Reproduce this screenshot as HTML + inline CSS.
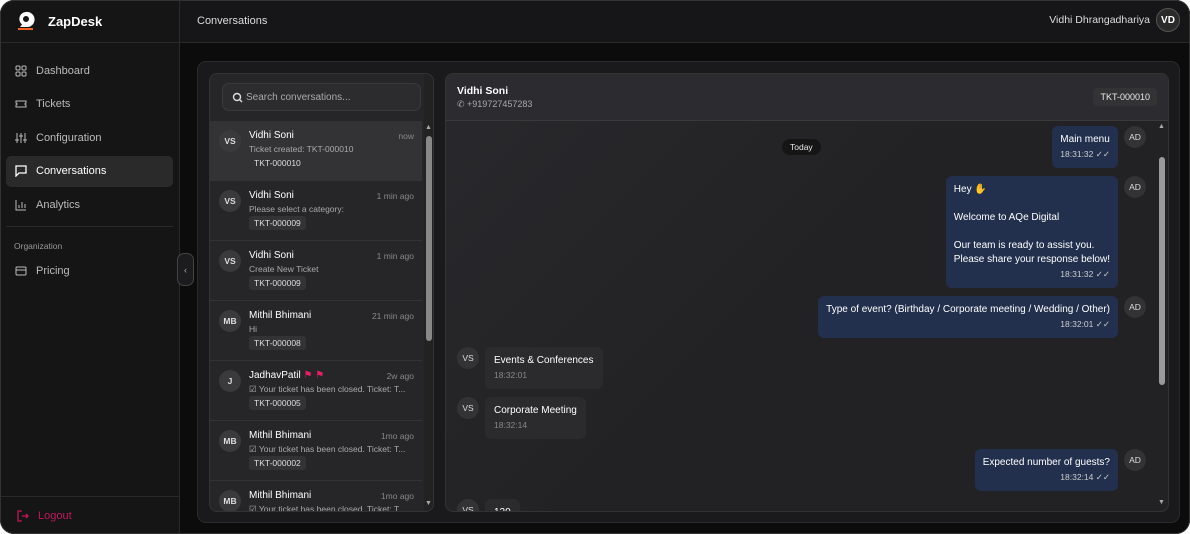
<!DOCTYPE html>
<html><head><meta charset="utf-8"><style>
*{box-sizing:border-box;margin:0;padding:0}
body{width:1190px;height:534px;background:#fff;font-family:"Liberation Sans",sans-serif;color:#e8e8e8;overflow:hidden;position:relative}
.app{position:absolute;left:0;top:0;width:1190px;height:534px;border-radius:14px;overflow:hidden;background:#0c0c0d}
.frame{position:absolute;left:0;top:0;width:1190px;height:534px;border-radius:14px;border:1px solid #333;pointer-events:none}
.side{position:absolute;left:0;top:0;width:180px;height:534px;background:#151515;border-right:1px solid #2a2a2a}
.logo{height:43px;border-bottom:1px solid #2a2a2a;display:flex;align-items:center;padding-left:16px;font-weight:bold;font-size:13px;color:#fff}
.nav{padding:12px 6px}
.it{height:31px;display:flex;align-items:center;padding-left:9px;font-size:11px;color:#bbb;margin-bottom:2.6px;border-radius:5px}
.it svg{margin-right:9px}
.it.act{background:#2a2a2b;color:#fff}
.org{font-size:8.5px;color:#999;padding:14px 8px 4px;border-top:1px solid #2a2a2a;margin-top:6px}
.logout{position:absolute;left:0;bottom:0;width:180px;height:38px;border-top:1px solid #2a2a2a;display:flex;align-items:center;padding-left:17px;color:#c2185b;font-size:11px}
.top{position:absolute;left:180px;top:0;right:0;height:43px;background:#161618;border-bottom:1px solid #2a2a2a;display:flex;align-items:center;padding-left:17px;font-size:11px;color:#ddd}
.user{position:absolute;right:10px;top:8px;display:flex;align-items:center;font-size:10.5px}
.vd{width:24px;height:24px;border-radius:50%;background:#2a2a2a;border:1px solid #555;margin-left:6px;font-weight:bold;font-size:10px;display:flex;align-items:center;justify-content:center;color:#fff}
.card{position:absolute;left:197px;top:61px;width:983px;height:462px;background:#1a1a1c;border:1px solid #2a2a2c;border-radius:9px}
.list{position:absolute;left:209px;top:73px;width:225px;height:439px;background:#262628;border:1px solid #333;border-radius:8px;overflow:hidden}
.search{margin:9px 12px;height:28px;border:1px solid #3a3a3c;border-radius:7px;background:#2c2c2e;display:flex;align-items:center;padding-left:9px;font-size:10px;color:#aaa}
.conv{position:absolute;left:0;width:212px;height:60px;border-bottom:1px solid #333}
.av{position:absolute;left:9px;top:9px;width:22px;height:22px;border-radius:50%;background:#3a3a3c;font-size:8.5px;font-weight:bold;display:flex;align-items:center;justify-content:center;color:#ddd}
.nm{position:absolute;left:39px;top:9px;font-size:10px;color:#fff}
.tm{position:absolute;right:8px;top:10px;font-size:8.5px;color:#888}
.pv{position:absolute;left:39px;top:23px;font-size:8.5px;color:#aaa;white-space:nowrap}
.tag{position:absolute;left:39px;top:35px;background:#333335;font-size:8.5px;color:#ddd;padding:2px 5px;border-radius:3px}
.sb{position:absolute;left:214px;top:0;width:10px;height:439px;background:#222}
.chat{position:absolute;left:445px;top:73px;width:724px;height:439px;background:linear-gradient(135deg,#29292d,#222224 50%);border:1px solid #333;border-radius:8px;overflow:hidden}
.ch{height:47px;background:#2b2b30;border-bottom:1px solid #3a3a3c;padding:11px 11px}
.b{position:absolute;background:#22304e;border-radius:6px;font-size:10px;color:#fff;padding:7px 8px;line-height:14px}
.bi{position:absolute;background:#2b2b2d;border-radius:6px;font-size:10px;color:#fff;padding:7px 9px;line-height:14px}
.ts{font-size:8.5px;color:#ccc;text-align:right}
.bi .ts{color:#888;text-align:left}
.ca{position:absolute;width:22px;height:22px;border-radius:50%;background:#333336;font-size:8.5px;display:flex;align-items:center;justify-content:center;color:#ddd}
</style></head><body><div class="app">
<div class="side">
<div class="logo"><svg width="20" height="22" viewBox="0 0 20 22"><path d="M10 2a7 7 0 0 0-4 12.5L4 17h8a7 7 0 0 0-2-15zm0 4a3 3 0 1 1 0 6 3 3 0 0 1 0-6z" fill="#fff"/><path d="M2 18h15v2H2z" fill="#f26522"/></svg><span style="margin-left:12px">ZapDesk</span></div>
<div class="nav">
<div class="it"><svg width="12" height="12" fill="none" stroke="#bbb"><rect x="1" y="1" width="4" height="4" rx="1"/><rect x="7" y="1" width="4" height="4" rx="1"/><rect x="1" y="7" width="4" height="4" rx="1"/><rect x="7" y="7" width="4" height="4" rx="1"/></svg>Dashboard</div>
<div class="it"><svg width="12" height="12" fill="none" stroke="#bbb"><path d="M1 3h10v2a1 1 0 0 0 0 2v2H1V7a1 1 0 0 0 0-2z"/></svg>Tickets</div>
<div class="it"><svg width="12" height="12" fill="none" stroke="#bbb"><path d="M2 1v10M6 1v10M10 1v10M0 8h4M4 4h4M8 8h4"/></svg>Configuration</div>
<div class="it act"><svg width="12" height="12" fill="none" stroke="#fff" stroke-width="1.3"><path d="M1 1h10v7H4l-3 3z"/></svg>Conversations</div>
<div class="it"><svg width="12" height="12" fill="none" stroke="#bbb"><path d="M1 1v10h10M4 9V6M7 9V3M10 9V5"/></svg>Analytics</div>
<div class="org">Organization</div>
<div class="it"><svg width="12" height="12" fill="none" stroke="#bbb"><rect x="1" y="2" width="10" height="8" rx="1"/><path d="M1 5h10"/></svg>Pricing</div>
</div>
<div class="logout"><svg width="12" height="12" fill="none" stroke="#c2185b" stroke-width="1.3" style="margin-right:9px"><path d="M5 1H1v10h4M5 6h6M9 4l2 2-2 2"/></svg>Logout</div>
</div>
<div class="top">Conversations<div class="user">Vidhi Dhrangadhariya<div class="vd">VD</div></div></div>
<div class="card"></div>
<div style="position:absolute;left:177px;top:253px;width:17px;height:33px;border:1px solid #444;border-radius:7px;background:#1c1c1e;color:#aaa;font-size:9px;display:flex;align-items:center;justify-content:center">‹</div>
<div class="list">
<div class="search"><svg width="11" height="11" fill="none" stroke="#ddd" stroke-width="1.4" style="margin-right:3px"><circle cx="5" cy="5" r="3.5"/><path d="M7.5 7.5l2.5 2.5"/></svg>Search conversations...</div>
<div class="conv" style="top:47px;background:#333335"><div class="av">VS</div><div class="nm">Vidhi Soni</div><div class="tm">now</div><div class="pv">Ticket created: TKT-000010</div><div class="tag">TKT-000010</div></div>
<div class="conv" style="top:107px"><div class="av">VS</div><div class="nm">Vidhi Soni</div><div class="tm">1 min ago</div><div class="pv">Please select a category:</div><div class="tag">TKT-000009</div></div>
<div class="conv" style="top:167px"><div class="av">VS</div><div class="nm">Vidhi Soni</div><div class="tm">1 min ago</div><div class="pv">Create New Ticket</div><div class="tag">TKT-000009</div></div>
<div class="conv" style="top:227px"><div class="av">MB</div><div class="nm">Mithil Bhimani</div><div class="tm">21 min ago</div><div class="pv">Hi</div><div class="tag">TKT-000008</div></div>
<div class="conv" style="top:287px"><div class="av">J</div><div class="nm">JadhavPatil <span style="color:#e91e63">⚑ ⚑</span></div><div class="tm">2w ago</div><div class="pv">☑ Your ticket has been closed. Ticket: T...</div><div class="tag">TKT-000005</div></div>
<div class="conv" style="top:347px"><div class="av">MB</div><div class="nm">Mithil Bhimani</div><div class="tm">1mo ago</div><div class="pv">☑ Your ticket has been closed. Ticket: T...</div><div class="tag">TKT-000002</div></div>
<div class="conv" style="top:407px"><div class="av">MB</div><div class="nm">Mithil Bhimani</div><div class="tm">1mo ago</div><div class="pv">☑ Your ticket has been closed. Ticket: T...</div></div>
<div class="sb"><div style="position:absolute;left:2px;top:62px;width:6px;height:205px;background:#888;border-radius:3px"></div><div style="position:absolute;left:1px;top:50px;font-size:7px;color:#aaa">▲</div><div style="position:absolute;left:1px;top:426px;font-size:7px;color:#aaa">▼</div></div>
</div>
<div class="chat">
<div class="ch"><div style="font-weight:bold;font-size:10.5px;color:#fff">Vidhi Soni</div><div style="font-size:9px;color:#aaa;margin-top:2px">✆ +919727457283</div>
<div style="position:absolute;right:11px;top:14px;background:#333336;font-size:9px;padding:4px 7px;border-radius:4px">TKT-000010</div></div>
<div style="position:absolute;left:336px;top:65px;background:#151516;border-radius:8px;padding:3px 8px;font-size:8.5px">Today</div>
<div class="b" style="right:50px;top:52px">Main menu<div class="ts">18:31:32 ✓✓</div></div><div class="ca" style="right:22px;top:52px">AD</div>
<div class="b" style="right:50px;top:102px">Hey <span style="color:#f39c12">✋</span><br><br>Welcome to AQe Digital<br><br>Our team is ready to assist you.<br>Please share your response below!<div class="ts">18:31:32 ✓✓</div></div><div class="ca" style="right:22px;top:102px">AD</div>
<div class="b" style="right:50px;top:222px">Type of event? (Birthday / Corporate meeting / Wedding / Other)<div class="ts">18:32:01 ✓✓</div></div><div class="ca" style="right:22px;top:222px">AD</div>
<div class="ca" style="left:11px;top:273px">VS</div><div class="bi" style="left:39px;top:273px">Events &amp; Conferences<div class="ts">18:32:01</div></div>
<div class="ca" style="left:11px;top:323px">VS</div><div class="bi" style="left:39px;top:323px">Corporate Meeting<div class="ts">18:32:14</div></div>
<div class="b" style="right:50px;top:375px">Expected number of guests?<div class="ts">18:32:14 ✓✓</div></div><div class="ca" style="right:22px;top:375px">AD</div>
<div class="ca" style="left:11px;top:425px">VS</div><div class="bi" style="left:39px;top:425px">120</div>
<div style="position:absolute;right:0;top:47px;width:12px;height:392px"><div style="position:absolute;left:3px;top:36px;width:6px;height:228px;background:#999;border-radius:3px"></div><div style="position:absolute;left:2px;top:2px;font-size:7px;color:#aaa">▲</div><div style="position:absolute;left:2px;top:378px;font-size:7px;color:#aaa">▼</div></div>
</div>
</div><div class="frame"></div></body></html>
